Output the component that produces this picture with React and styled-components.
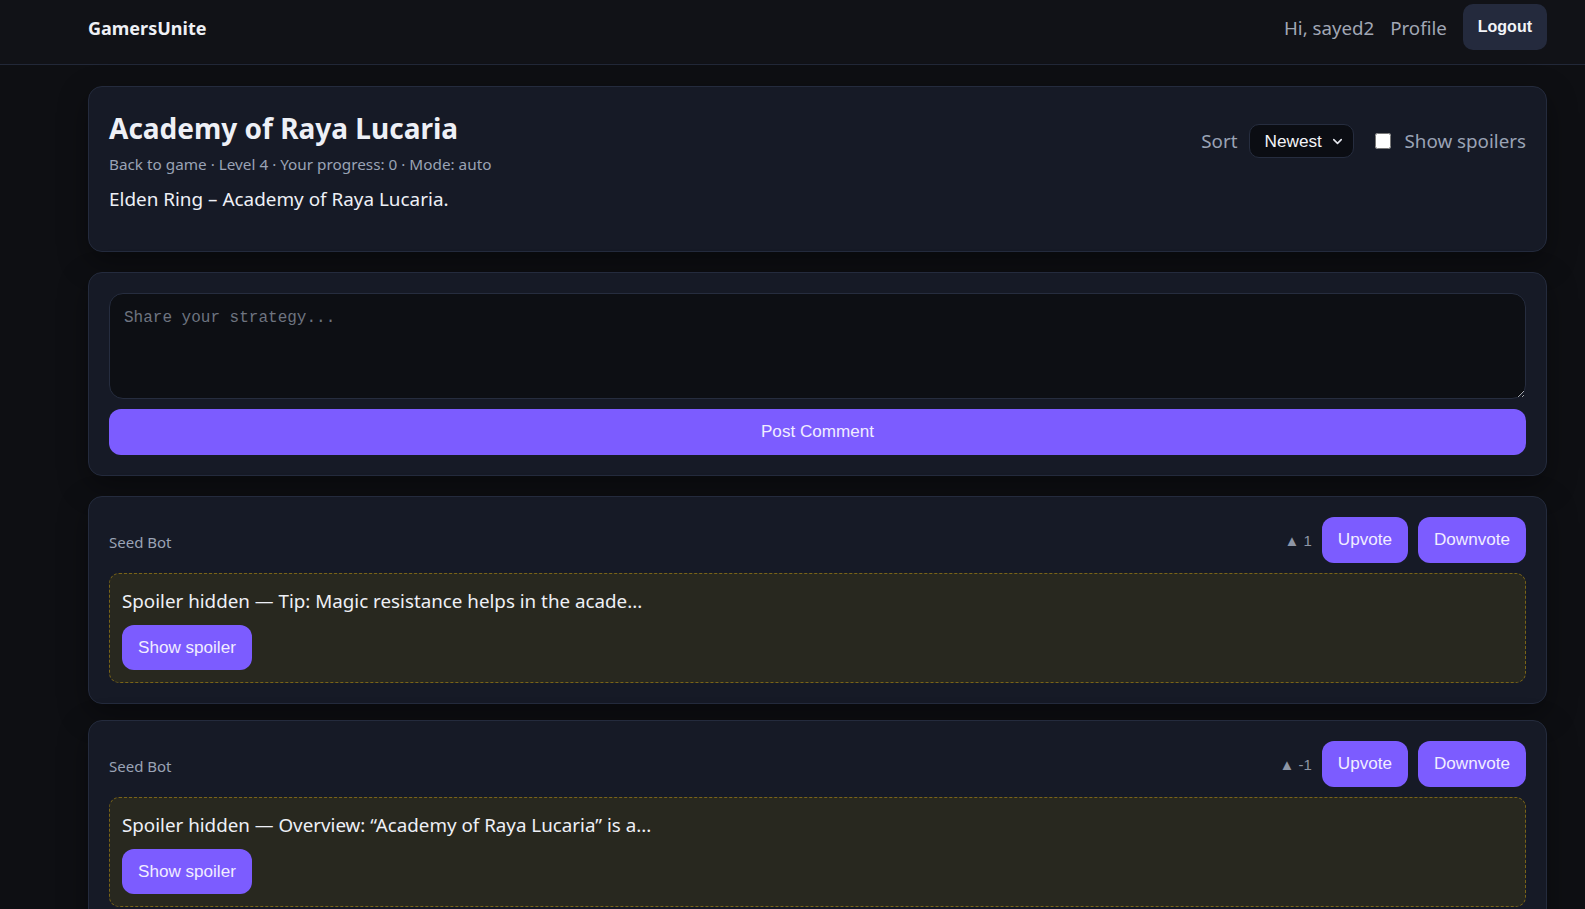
import React from "react";
import styled, { createGlobalStyle } from "styled-components";
import { ChevronDown } from "lucide-react";

const GlobalStyle = createGlobalStyle`
  * { box-sizing: border-box; }
  html, body {
    margin: 0;
    padding: 0;
    background: #0e0f13;
    color: #e8eaf0;
    font-family: "Noto Sans", "Open Sans", sans-serif;
  }
`;

const Page = styled.div`
  min-height: 100vh;
  background: #0e0f13;
`;

const TopBar = styled.header`
  display: flex;
  align-items: center;
  justify-content: space-between;
  height: 65px;
  padding: 0 38px 10px 88px;
  background: #111217;
  border-bottom: 1px solid #222838;
`;

const Brand = styled.div`
  font-size: 18px;
  font-weight: 700;
  color: #eef0f5;
  padding-top: 2px;
`;

const NavRight = styled.nav`
  display: flex;
  align-items: center;
  gap: 16px;
  font-size: 18.7px;
  color: #a1a7b5;
`;

const NavLink = styled.span`
  padding-top: 1px;
`;

const LogoutButton = styled.button`
  height: 46px;
  padding: 0 15px;
  border: none;
  border-radius: 10px;
  background: #242a3d;
  color: #f3f4f8;
  font-family: "Liberation Sans", Arial, sans-serif;
  font-size: 16px;
  font-weight: 700;
`;

const Main = styled.main`
  display: flex;
  flex-direction: column;
  padding: 21px 38px 40px 88px;
`;

const Card = styled.section`
  background: #161a26;
  border: 1px solid #242b3d;
  border-radius: 14px;
  padding: 20px;
  margin-bottom: ${(p) => p.$gap || 20}px;
  box-shadow: 0 10px 30px rgba(0, 0, 0, 0.35);
`;

const HeadRow = styled.div`
  display: flex;
  align-items: center;
  justify-content: space-between;
`;

const Title = styled.h1`
  margin: 0;
  font-size: 28px;
  line-height: 42px;
  font-weight: 700;
  color: #eef0f6;
`;

const Meta = styled.div`
  margin-top: 4px;
  font-size: 15.3px;
  line-height: 22px;
  color: #9aa3b5;
`;

const Desc = styled.p`
  margin: 11px 0 19px;
  font-size: 18.9px;
  line-height: 26px;
  color: #eef0f6;
`;

const Controls = styled.div`
  display: flex;
  align-items: center;
  font-size: 18.8px;
  color: #9aa3b5;
`;

const SelectWrap = styled.div`
  position: relative;
  margin-left: 11px;
`;

const Select = styled.select`
  appearance: none;
  width: 105px;
  height: 34px;
  padding: 0 0 0 15px;
  background: #0b0d13;
  border: 1px solid #262d3f;
  border-radius: 10px;
  color: #f3f4f8;
  font-family: "Liberation Sans", Arial, sans-serif;
  font-size: 17.2px;
`;

const Chevron = styled(ChevronDown)`
  position: absolute;
  right: 9px;
  top: 10px;
  pointer-events: none;
  color: #e5e7ee;
`;

const Check = styled.input`
  width: 16px;
  height: 16px;
  margin: 0 14px 0 21px;
`;

const Composer = styled.textarea`
  display: block;
  width: 100%;
  height: 106px;
  padding: 14px;
  background: #0d0f14;
  border: 1px solid #262d3f;
  border-radius: 14px;
  color: #e8eaf0;
  font-family: "Liberation Mono", "DejaVu Sans Mono", monospace;
  font-size: 16px;
  line-height: 20px;
  resize: vertical;
  &::placeholder {
    color: #6e7480;
  }
`;

const Button = styled.button`
  height: ${(p) => p.$h || 45}px;
  padding: 0 16px;
  border: none;
  border-radius: 12px;
  background: #7c5cff;
  color: #f1edff;
  font-family: "Liberation Sans", Arial, sans-serif;
  font-size: 17.1px;
  cursor: pointer;
`;

const WideButton = styled(Button)`
  display: block;
  width: 100%;
  margin-top: 10px;
`;

const CommentHead = styled.div`
  display: flex;
  align-items: center;
  justify-content: space-between;
  height: 46px;
`;

const Author = styled.span`
  font-size: 15px;
  color: #9aa3b5;
  padding-top: 4px;
`;

const Votes = styled.div`
  display: flex;
  align-items: center;
  gap: 10px;
`;

const Score = styled.span`
  font-family: "Liberation Sans", Arial, sans-serif;
  font-size: 15px;
  color: #8e96a6;
`;

const Spoiler = styled.div`
  margin-top: 10px;
  padding: 12px;
  background: #28281f;
  border: 1px dashed #7a6418;
  border-radius: 10px;
`;

const SpoilerText = styled.p`
  margin: 0 0 9px;
  font-size: 18.8px;
  line-height: 30px;
  color: #eef0f6;
`;

const comments = [
  { score: 1, text: "Spoiler hidden — Tip: Magic resistance helps in the acade..." },
  { score: -1, text: "Spoiler hidden — Overview: “Academy of Raya Lucaria” is a..." },
];

export default function App() {
  return (
    <Page>
      <GlobalStyle />
      <TopBar>
        <Brand>GamersUnite</Brand>
        <NavRight>
          <NavLink>Hi, sayed2</NavLink>
          <NavLink>Profile</NavLink>
          <LogoutButton>Logout</LogoutButton>
        </NavRight>
      </TopBar>

      <Main>
        <Card>
          <HeadRow>
            <div>
              <Title>Academy of Raya Lucaria</Title>
              <Meta>Back to game · Level 4 · Your progress: 0 · Mode: auto</Meta>
            </div>
            <Controls>
              <span>Sort</span>
              <SelectWrap>
                <Select defaultValue="newest">
                  <option value="newest">Newest</option>
                  <option value="top">Top</option>
                </Select>
                <Chevron size={15} strokeWidth={2.5} />
              </SelectWrap>
              <Check type="checkbox" />
              <span>Show spoilers</span>
            </Controls>
          </HeadRow>
          <Desc>Elden Ring – Academy of Raya Lucaria.</Desc>
        </Card>

        <Card>
          <Composer placeholder="Share your strategy..." />
          <WideButton $h={46}>Post Comment</WideButton>
        </Card>

        {comments.map((c, i) => (
          <Card key={i} $gap={16}>
            <CommentHead>
              <Author>Seed Bot</Author>
              <Votes>
                <Score>▲ {c.score}</Score>
                <Button $h={46}>Upvote</Button>
                <Button $h={46}>Downvote</Button>
              </Votes>
            </CommentHead>
            <Spoiler>
              <SpoilerText>{c.text}</SpoilerText>
              <Button>Show spoiler</Button>
            </Spoiler>
          </Card>
        ))}
      </Main>
    </Page>
  );
}
